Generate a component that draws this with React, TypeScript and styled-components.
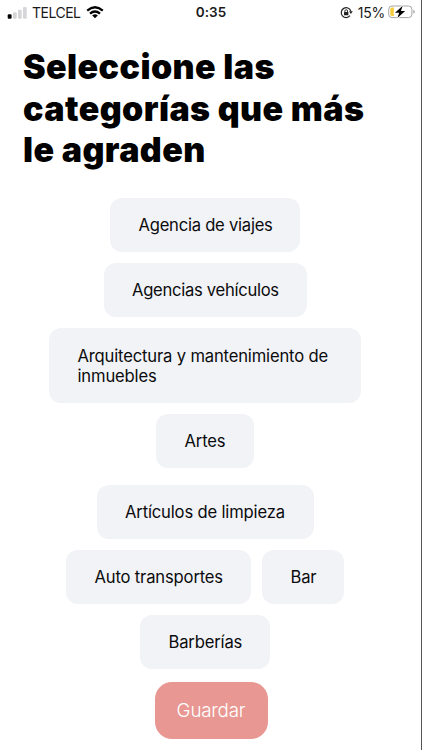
import React from "react";
import styled, { createGlobalStyle } from "styled-components";

const Global = createGlobalStyle`
  * { box-sizing: border-box; }
  body { margin: 0; background: #fff; font-family: Inter, sans-serif; }
`;
const Screen = styled.main`width: 422px; height: 750px; overflow: hidden; background: #fff; display: flex; flex-direction: column; border-right: 1px solid #545456;`;
const StatusBar = styled.header`height: 24px; flex: none; display: grid; grid-template-columns: 1fr auto 1fr; align-items: center; padding: 0 6px 0 7px; font-size: 14px; letter-spacing: -0.5px; color: #1a1a1a;`;
const Group = styled.div<{ $end?: boolean }>`display: flex; align-items: center; gap: 5px; justify-content: ${p => p.$end ? "flex-end" : "flex-start"}; svg { display: block; flex: none; }`;
const Carrier = styled.span`letter-spacing: -0.5px; line-height: 17px;`;
const Percent = styled.span`line-height: 17px; margin: 0 -2px 0 0; letter-spacing: -0.25px;`;
const Clock = styled.time`font-size: 13.5px; font-weight: 600; letter-spacing: 0.1px;`;
const Title = styled.h1`margin: 22px 0 0 23px; width: 370px; font-size: 34px; line-height: 41.6px; font-weight: 900; letter-spacing: 0.42px; color: #000;`;
const List = styled.div`display: flex; flex-direction: column; align-items: center; padding-top: 27.2px; width: 410px;`;
const Row = styled.div<{ $gap?: number }>`display: flex; gap: 11px; margin-bottom: ${p => p.$gap ?? 11.2}px;`;
const Chip = styled.button<{ $w: number; $h?: number; $track?: number }>`width: ${p => p.$w}px; height: ${p => p.$h ?? 54}px; padding: 0 0 0 28.5px; border: 0; border-radius: 12px; background: #f2f3f7; color: #0b0b0d; font: 400 16.6px/20px Inter, sans-serif; letter-spacing: ${p => p.$track ?? -0.16}px; text-align: left; white-space: nowrap;`;
const Save = styled.button`width: 113px; height: 57px; margin-left: 12px; border: 0; border-radius: 17px; background: #e89792; color: #fff; font: 350 18.8px Inter, sans-serif; letter-spacing: -0.2px; padding: 0;`;

const Signal = () => (
  <svg width="20" height="13" viewBox="0 0 20 13">
    <rect x="0.7" y="8.3" width="3.9" height="4.4" rx="1.2" fill="#000" />
    <g fill="#d6d6d8">
      <rect x="6" y="6.3" width="3.7" height="6.4" rx="1" />
      <rect x="11" y="3.7" width="3.7" height="9" rx="1" />
      <rect x="16" y="1" width="3.7" height="11.7" rx="1" />
    </g>
  </svg>
);
const Wifi = () => (
  <svg width="18" height="13" viewBox="0 0 18 13" fill="none" stroke="#000" strokeWidth="2.3">
    <path d="M1.2 4.6 Q9 -2 16.8 4.6" />
    <path d="M4 7.7 Q9 3.4 14 7.7" />
    <path d="M9 12.3 L6.2 9.5 Q9 7.2 11.8 9.5 Z" fill="#000" stroke="none" />
  </svg>
);
const RotationLock = () => (
  <svg width="13" height="13" viewBox="0 0 13 13" fill="none" stroke="#222">
    <path d="M10 9.7 A4.9 4.9 0 1 1 10.8 5" strokeWidth="1.2" />
    <path d="M9 5.2 H12.8 L10.9 8 Z" fill="#222" stroke="none" />
    <rect x="4" y="5.9" width="4.4" height="3.3" rx="0.5" fill="#222" stroke="none" />
    <path d="M4.9 6 V5 A1.3 1.3 0 0 1 7.5 5 V6" strokeWidth="0.9" />
  </svg>
);
const Battery = () => (
  <svg width="27" height="14" viewBox="0 0 27 14">
    <rect x="0.7" y="1" width="23.2" height="11.6" rx="3.3" fill="none" stroke="#a5a5a7" />
    <path d="M4 2.6 H5.9 V11 H4 Q2.3 11 2.3 9.3 V4.3 Q2.3 2.6 4 2.6 Z" fill="#f8cd3c" />
    <path d="M25.3 4.8 Q26.8 5.5 26.8 6.8 Q26.8 8.1 25.3 8.8 Z" fill="#a5a5a7" />
    <path d="M14.7 0.8 L7 7.7 H11.2 L9.4 13 L17.2 5.9 H12.9 Z" fill="#000" stroke="#fff" strokeWidth="1.8" paintOrder="stroke" />
  </svg>
);

export default function App() {
  return <Screen><Global />
    <StatusBar>
      <Group><Signal /><Carrier>TELCEL</Carrier><Wifi /></Group>
      <Clock>0:35</Clock>
      <Group $end><RotationLock /><Percent>15%</Percent><Battery /></Group>
    </StatusBar>
    <Title>Seleccione las categorías que más le agraden</Title>
    <List>
      <Row><Chip $w={190} $track={-0.24}>Agencia de viajes</Chip></Row>
      <Row><Chip $w={203} $track={-0.28}>Agencias vehículos</Chip></Row>
      <Row><Chip $w={312} $h={74.5} $track={-0.16}>Arquitectura y mantenimiento de<br />inmuebles</Chip></Row>
      <Row $gap={17}><Chip $w={98}>Artes</Chip></Row>
      <Row><Chip $w={217}>Artículos de limpieza</Chip></Row>
      <Row><Chip $w={185}>Auto transportes</Chip><Chip $w={82}>Bar</Chip></Row>
      <Row $gap={13}><Chip $w={130}>Barberías</Chip></Row>
      <Save>Guardar</Save>
    </List>
  </Screen>;
}
